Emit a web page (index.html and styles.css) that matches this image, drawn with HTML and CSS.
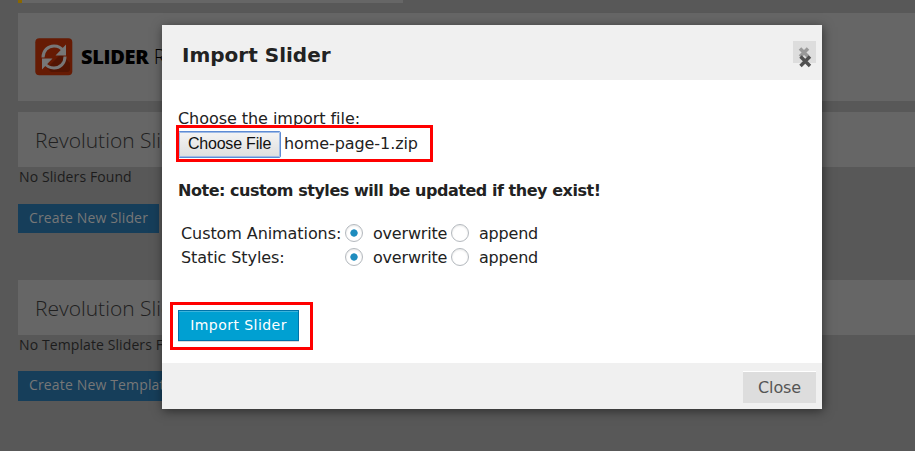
FILE: index.html
```html
<!DOCTYPE html>
<html lang="en">
<head>
<meta charset="utf-8">
<title>Import Slider</title>
<link rel="stylesheet" href="styles.css">
</head>
<body>
<main class="page">
  <div class="notice"></div>
  <header class="brand">
    <svg class="logo" viewBox="0 0 38 38" aria-hidden="true">
      <rect width="37" height="37" x=".3" y=".2" rx="4" fill="#661b04"/>
      <path d="M12 30 26 16 35 25v6q0 3-3 3H16z" fill="#531503"/>
      <g fill="none" stroke="#777" stroke-width="3">
        <path d="M8 19.500C8 12.500 13 8 19 8c4 0 7.500 2 9.500 5"/>
        <path d="M30 18.500C30 25.500 25 30 19 30c-4 0-7.500-2-9.500-5"/>
      </g>
      <path d="M31 6.500v11H20.500zM7 31.500V20.500h10.500z" fill="#777"/>
    </svg>
    <span class="brand-name"><b>SLIDER</b> REVOLUTION</span>
  </header>
  <section class="group">
    <h2>Revolution Sliders</h2>
    <p>No Sliders Found</p>
    <a class="create">Create New Slider</a>
  </section>
  <section class="group group-templates">
    <h2>Revolution Slider Templates</h2>
    <p>No Template Sliders Found</p>
    <a class="create">Create New Template Slider</a>
  </section>
</main>

<div class="dialog" role="dialog">
  <div class="dialog-head">
    <span class="title">Import Slider</span>
    <span class="x-button">
      <svg viewBox="0 0 23 30" aria-hidden="true">
        <path d="m7 7.500 8 8m0-8-8 8" stroke="#999" stroke-width="3.500"/>
        <path d="m7.500 15.500 9.500 9.500m0-9.500-9.500 9.500" stroke="#505050" stroke-width="3.400"/>
      </svg>
    </span>
  </div>
  <div class="dialog-body">
    <div class="choose-label">Choose the import file:</div>
    <div class="file-row"><button class="file-button">Choose File</button><span class="file-name">home-page-1.zip</span></div>
    <div class="note">Note: custom styles will be updated if they exist!</div>
    <div class="options">
      <span class="option-name">Custom Animations:</span><i class="radio on"></i><span>overwrite</span><i class="radio"></i><span>append</span>
      <span class="option-name">Static Styles:</span><i class="radio on"></i><span>overwrite</span><i class="radio"></i><span>append</span>
    </div>
    <button class="import">Import Slider</button>
  </div>
  <div class="dialog-foot"><button class="close">Close</button></div>
  <div class="mark mark-file"></div>
  <div class="mark mark-import"></div>
</div>
</body>
</html>
```
FILE: styles.css
```css
* { box-sizing: border-box; }
body {
  margin: 0;
  height: 451px;
  overflow: hidden;
  background: #585858;
  font-family: "Open Sans", sans-serif;
}
.page { padding-left: 18px; }
.notice {
  width: 385px;
  height: 3px;
  background: #666;
  border-left: 4px solid #8a6700;
}
.brand {
  display: flex;
  align-items: center;
  height: 88px;
  margin-top: 10px;
  padding-left: 17px;
  background: #666;
  color: #000;
}
.logo { width: 38px; height: 38px; }
.brand-name {
  margin-left: 8px;
  font-size: 20px;
  font-weight: 300;
  line-height: 26px;
  white-space: nowrap;
}
.brand-name b { font-weight: 800; letter-spacing: -.3px; }
.group { margin-top: 11px; }
.group-templates { margin-top: 47px; }
.group h2 {
  margin: 0;
  height: 55px;
  padding-left: 17px;
  background: #666;
  color: #202020;
  font-size: 21px;
  font-weight: 300;
  line-height: 56px;
}
.group p {
  margin: 0;
  height: 37px;
  padding-left: 1px;
  color: #1c1c1c;
  font-size: 14px;
  line-height: 20px;
  letter-spacing: .1px;
}
.group-templates p { height: 36px; }
.create {
  display: block;
  width: max-content;
  height: 29px;
  padding: 0 11px;
  background: #163e5a;
  color: #777;
  font-size: 14px;
  line-height: 28px;
  letter-spacing: .15px;
}
.group-templates .create { height: 30px; }
.dialog {
  position: absolute;
  left: 162px;
  top: 25px;
  width: 660px;
  height: 384px;
  display: flex;
  flex-direction: column;
  background: #fff;
  color: #222;
  font: 16px/20px "DejaVu Sans", sans-serif;
  box-shadow: 1px 2px 10px rgba(0, 0, 0, .5);
}
.dialog-head {
  display: flex;
  justify-content: space-between;
  height: 55px;
  padding: 16px 6px 0 20px;
  background: #f0f0f0;
}
.title { font-size: 20px; font-weight: bold; line-height: 29px; }
.x-button { width: 23px; height: 22px; background: #ddd; }
.x-button svg { display: block; width: 23px; height: 30px; }
.dialog-body { flex: 1; padding: 29px 16px 0; }
.choose-label { height: 22px; letter-spacing: -.05px; }
.file-row { display: flex; align-items: center; height: 27px; }
.file-button {
  width: 103px;
  height: 27px;
  padding: 0 0 2px;
  border: 1px solid #5e8bd4;
  outline: 1px solid #9fbbe6;
  outline-offset: -2px;
  border-radius: 2px;
  background: linear-gradient(#f4f4f4, #dedede);
  color: #111;
  font: 16px "Liberation Sans", sans-serif;
  letter-spacing: -.2px;
}
.file-name { margin: -2px 0 0 3px; letter-spacing: -.08px; }
.note {
  margin-top: 23px;
  height: 20px;
  font-weight: bold;
  white-space: nowrap;
  letter-spacing: -.46px;
}
.options {
  display: grid;
  grid-template-columns: 164px 28px 78px 28px 80px;
  grid-auto-rows: 24px;
  align-items: center;
  margin: 20px 0 0 3px;
  white-space: nowrap;
}
.options span { padding-top: 1px; letter-spacing: -.2px; }
.options .option-name { letter-spacing: -.08px; }
.radio {
  width: 18px;
  height: 18px;
  border: 1px solid #b4b9be;
  border-radius: 50%;
  box-shadow: inset 0 1px 2px rgba(0, 0, 0, .1);
}
.radio.on { background: radial-gradient(circle, #1e8cbe 0 3.300px, transparent 4px); }
.import {
  display: block;
  width: 121px;
  height: 31px;
  margin-top: 41px;
  padding: 0 0 2px;
  border: 1px solid #0073aa;
  border-radius: 0;
  background: #00a0d2;
  box-shadow: inset 0 1px 0 rgba(120, 200, 230, .5), 0 1px 0 rgba(0, 0, 0, .15);
  color: #fff;
  font: 14px "DejaVu Sans", sans-serif;
  letter-spacing: .45px;
}
.dialog-foot {
  display: flex;
  justify-content: flex-end;
  height: 46px;
  padding: 9px 6px 0;
  background: #f0f0f0;
}
.close {
  width: 73px;
  height: 31px;
  padding: 0;
  border: 0;
  background: #ddd;
  box-shadow: 0 -1px 0 #fff;
  color: #555;
  font: 16px "DejaVu Sans", sans-serif;
  letter-spacing: -.15px;
}
.mark { position: absolute; border: 3px solid #f00; }
.mark-file { left: 14px; top: 100px; width: 257px; height: 37px; }
.mark-import { left: 8px; top: 277px; width: 143px; height: 48px; }
```
